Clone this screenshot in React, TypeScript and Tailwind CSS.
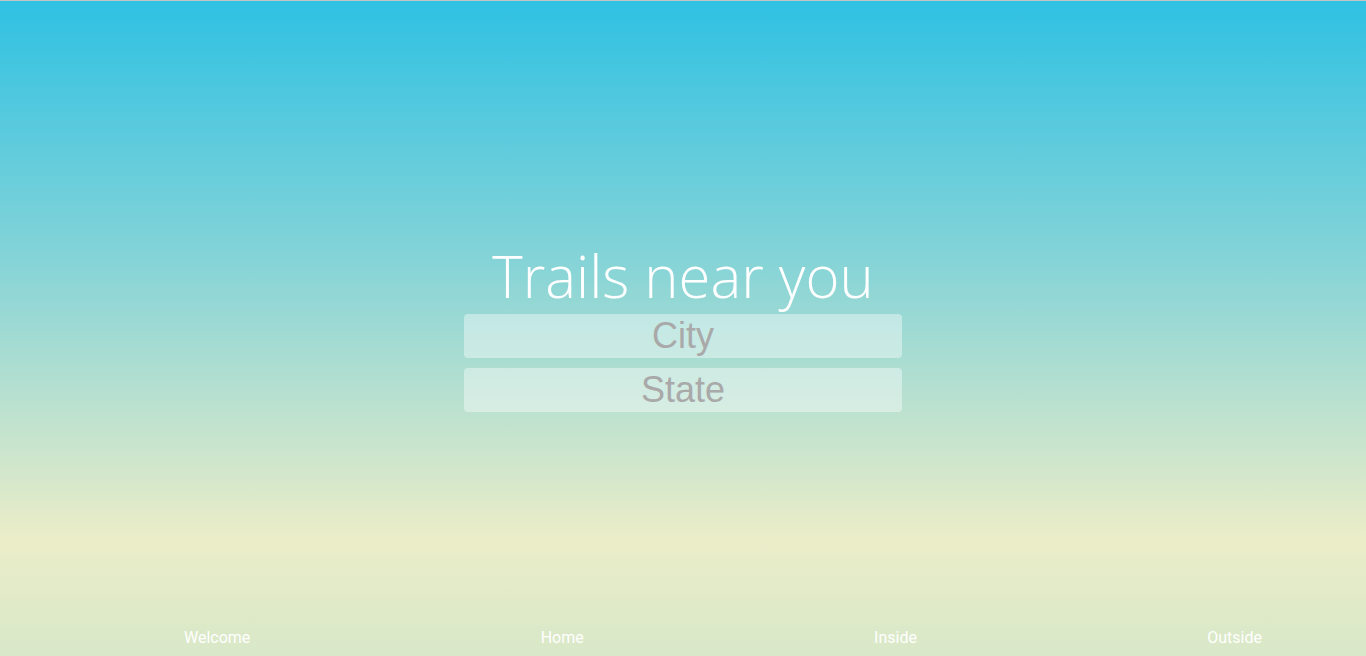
import React from "react";

export default function App() {
  return (
    <div className="h-[656px] w-full overflow-hidden border-t border-[#c4c4c4] bg-[linear-gradient(to_bottom,#2fc1e3_0%,#86d4d7_40%,#ebedc8_82%,#d8e8c8_100%)] flex flex-col">
      <main className="flex-1 flex flex-col items-center pt-[240px]">
        <h1 className="text-white text-[58px] leading-[70px] font-light font-['Open_Sans',sans-serif]">
          Trails near you
        </h1>
        <div className="mt-[3px] flex flex-col gap-[10px] w-[438px]">
          <input
            placeholder="City"
            className="h-[44px] w-full rounded-[4px] bg-white/40 text-center text-[36px] text-[#a9a9a9] placeholder:text-[#a9a9a9] outline-none font-['Liberation_Sans',Arial,sans-serif]"
          />
          <input
            placeholder="State"
            className="h-[44px] w-full rounded-[4px] bg-white/40 text-center text-[36px] text-[#a9a9a9] placeholder:text-[#a9a9a9] outline-none font-['Liberation_Sans',Arial,sans-serif]"
          />
        </div>
      </main>
      <nav className="h-[37px] flex items-center justify-between pl-[184px] pr-[104px] text-white text-[16px] font-normal font-['Roboto',sans-serif]">
        <a href="#">Welcome</a>
        <a href="#">Home</a>
        <a href="#">Inside</a>
        <a href="#">Outside</a>
      </nav>
    </div>
  );
}
